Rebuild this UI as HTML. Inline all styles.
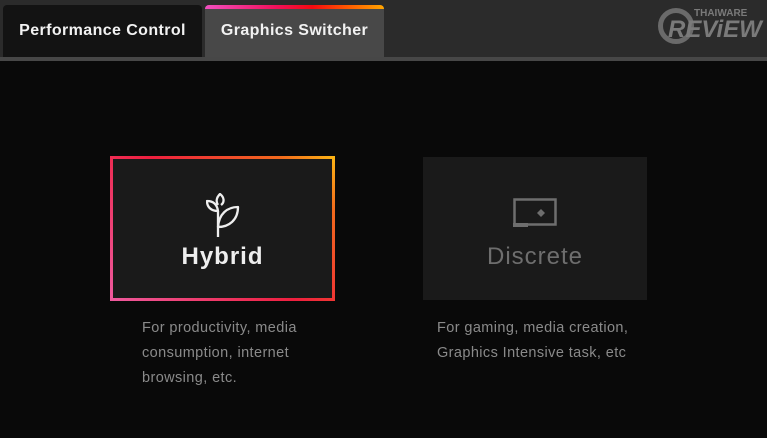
<!DOCTYPE html>
<html><head><meta charset="utf-8"><style>
*{margin:0;padding:0;box-sizing:border-box}
body{width:767px;height:438px;background:#090909;font-family:"Liberation Sans",sans-serif;position:relative;overflow:hidden}
.top{position:absolute;left:0;top:0;width:767px;height:57px;background:#2b2b2b}
.line{position:absolute;left:0;top:57px;width:767px;height:4px;background:#474747}
.tab{position:absolute;top:5px;height:52px;color:#f2f2f2;font-weight:bold;font-size:16px;letter-spacing:0.4px;display:flex;align-items:center;justify-content:center;border-radius:4px 4px 0 0}
.t1{left:3px;width:199px;background:#131313}
.t2{left:205px;width:179px;background:#484848;overflow:hidden}
.t2:before{content:"";position:absolute;left:0;top:0;right:0;height:4px;background:linear-gradient(90deg,#f04fc0,#f0105a 40%,#f50a10 60%,#ff5a00 80%,#ffa500)}
.hy{position:absolute;left:110px;top:156px;width:225px;height:145px;padding:3px;background:linear-gradient(45deg,#ee5a9e 0%,#ee1f3e 50%,#f26a1c 85%,#fdb714 100%)}
.hy div{width:100%;height:100%;background:#1a1a1a}
.di{position:absolute;left:423px;top:157px;width:224px;height:143px;background:#1a1a1a}
.lbl{position:absolute;font-size:24px;letter-spacing:1px;text-align:center}
.desc{position:absolute;font-size:14.5px;letter-spacing:0.4px;line-height:25px;color:#8a8a8a}
</style></head><body>
<div class="top"></div><div class="line"></div>
<div class="tab t1">Performance Control</div>
<div class="tab t2">Graphics Switcher</div>
<div style="position:absolute;left:658px;top:8px;width:36px;height:36px;border-radius:50%;border:5px solid #6a6a6a"></div>
<div style="position:absolute;left:694px;top:8px;font-size:10px;color:#7a7a7a;font-weight:bold">THAIWARE</div>
<div style="position:absolute;left:668px;top:16px;font-size:24px;color:#7a7a7a;font-weight:bold;font-style:italic">REViEW</div>
<div class="hy"><div></div></div>
<div class="di"></div>
<svg style="position:absolute;left:206px;top:193px" width="34" height="44" viewBox="0 0 34 44" fill="none" stroke="#eee" stroke-width="2.3" stroke-linejoin="round">
<path d="M12 44V18"/>
<path d="M12 18C5 18 1 14 1 8c6 0 10 3 11 10z"/>
<path d="M12 12c-2-3-2-7 2-11 4 3 5 8 1 11"/>
<path d="M12 34c11 0 20-7 20-20-11 0-19 7-20 20z"/>
</svg>
<div class="lbl" style="left:110px;width:225px;top:243px;color:#eee;font-weight:bold">Hybrid</div>
<svg style="position:absolute;left:513px;top:198px" width="44" height="34" viewBox="0 0 44 34">
<rect x="1.5" y="1.5" width="41" height="25" fill="none" stroke="#6e6e6e" stroke-width="2.5"/>
<rect x="0" y="25" width="15" height="4" fill="#6e6e6e"/>
<path d="M28 11l4 4-4 4-4-4z" fill="#6e6e6e"/></svg>
<div class="lbl" style="left:423px;width:224px;top:243px;color:#6e6e6e">Discrete</div>
<div class="desc" style="left:142px;top:316px">For productivity, media<br>consumption, internet<br>browsing, etc.</div>
<div class="desc" style="left:437px;top:316px">For gaming, media creation,<br>Graphics Intensive task, etc</div>
</body></html>
